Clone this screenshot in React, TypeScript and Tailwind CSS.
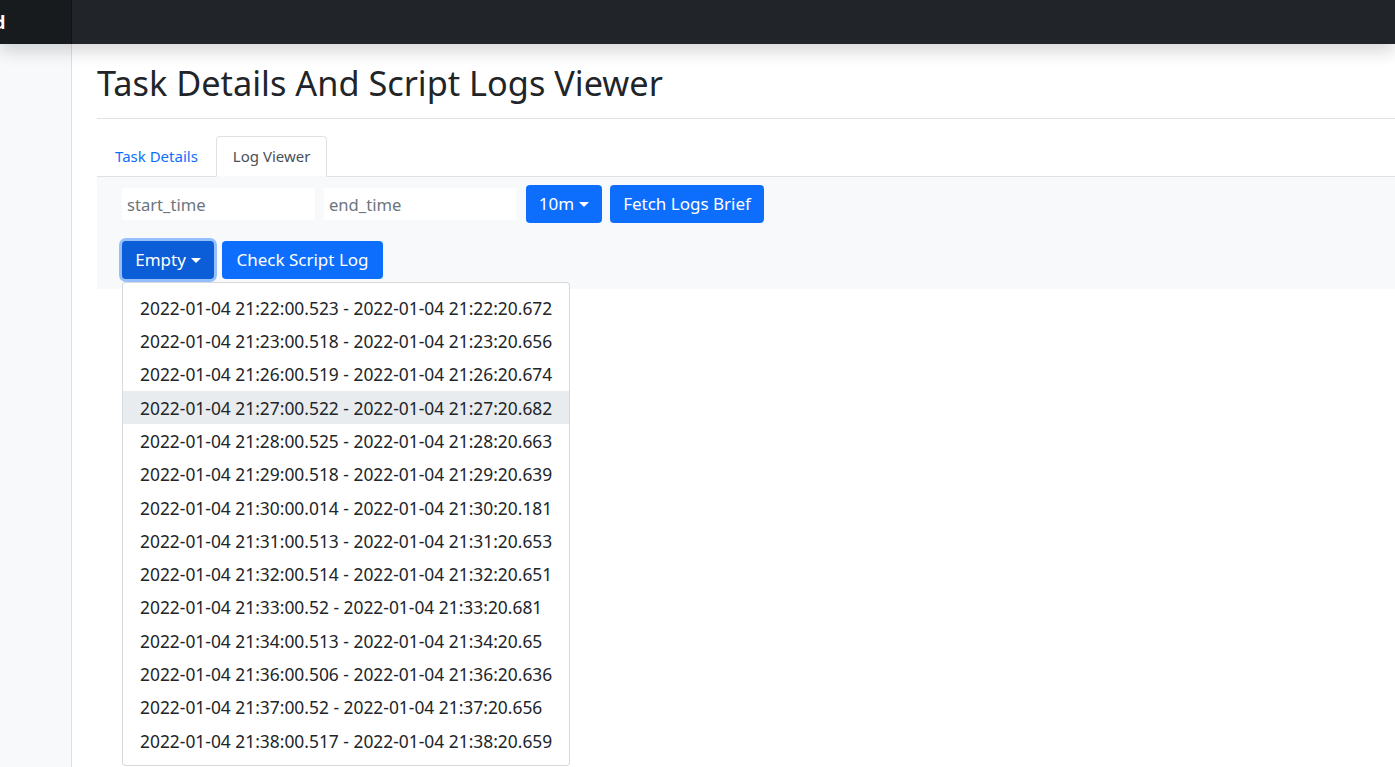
import { useState } from 'react';

const logRanges: string[] = [
  '2022-01-04 21:22:00.523 - 2022-01-04 21:22:20.672',
  '2022-01-04 21:23:00.518 - 2022-01-04 21:23:20.656',
  '2022-01-04 21:26:00.519 - 2022-01-04 21:26:20.674',
  '2022-01-04 21:27:00.522 - 2022-01-04 21:27:20.682',
  '2022-01-04 21:28:00.525 - 2022-01-04 21:28:20.663',
  '2022-01-04 21:29:00.518 - 2022-01-04 21:29:20.639',
  '2022-01-04 21:30:00.014 - 2022-01-04 21:30:20.181',
  '2022-01-04 21:31:00.513 - 2022-01-04 21:31:20.653',
  '2022-01-04 21:32:00.514 - 2022-01-04 21:32:20.651',
  '2022-01-04 21:33:00.52 - 2022-01-04 21:33:20.681',
  '2022-01-04 21:34:00.513 - 2022-01-04 21:34:20.65',
  '2022-01-04 21:36:00.506 - 2022-01-04 21:36:20.636',
  '2022-01-04 21:37:00.52 - 2022-01-04 21:37:20.656',
  '2022-01-04 21:38:00.517 - 2022-01-04 21:38:20.659',
];

function Caret() {
  return (
    <span className="ml-[5px] inline-block h-0 w-0 border-x-[5px] border-t-[5px] border-x-transparent border-t-white align-middle" />
  );
}

export default function App() {
  const [hovered, setHovered] = useState(3);
  const [tab, setTab] = useState('log');

  return (
    <div className="min-h-screen bg-white text-[#212529] font-['Noto_Sans','Open_Sans',sans-serif]">
      {/* top navbar */}
      <nav className="relative z-10 flex h-[44px] bg-[#212529] shadow-[0_8px_16px_rgba(0,0,0,0.15)]">
        <div className="flex w-[72px] items-center overflow-hidden bg-black/25 shadow-[inset_-1px_0_0_rgba(0,0,0,0.25)]">
          <span className="-ml-[6px] text-[18px] font-bold text-white">d</span>
        </div>
      </nav>

      <div className="flex">
        {/* sidebar */}
        <aside className="min-h-[723px] w-[72px] shrink-0 bg-[#f8f9fa] shadow-[inset_-1px_0_0_rgba(0,0,0,0.1)]" />

        {/* main */}
        <main className="flex-1 pl-[25px]">
          <h1 className="pt-[18px] pb-[15px] text-[34.3px] leading-[1.2] font-normal">
            Task Details And Script Logs Viewer
          </h1>
          <div className="border-b border-[#dee2e6]" />

          {/* tabs */}
          <div className="mt-[17px] flex border-b border-[#dee2e6] text-[15px]">
            <button
              onClick={() => setTab('details')}
              className={`-mb-px h-[41px] rounded-t-[4px] border px-[17px] ${
                tab === 'details' ? 'border-[#dee2e6] border-b-white bg-white text-[#495057]' : 'border-transparent text-[#0d6efd]'
              }`}
            >
              Task Details
            </button>
            <button
              onClick={() => setTab('log')}
              className={`-mb-px h-[41px] rounded-t-[4px] border px-[16px] ${
                tab === 'log' ? 'border-[#dee2e6] border-b-[#f8f9fa] bg-white text-[#495057]' : 'border-transparent text-[#0d6efd]'
              }`}
            >
              Log Viewer
            </button>
          </div>

          {/* tab content */}
          <div className="relative bg-[#f8f9fa] px-[25px] pt-[8px] pb-[8px]">
            <div className="flex items-center gap-[8px]">
              <input
                placeholder="start_time"
                className="h-[32px] w-[193px] bg-white px-[5px] text-[16.6px] outline-none placeholder:text-[#6c757d]"
              />
              <input
                placeholder="end_time"
                className="ml-[1px] h-[32px] w-[192px] bg-white px-[5px] text-[16.6px] outline-none placeholder:text-[#6c757d]"
              />
              <button className="ml-[2px] flex h-[38px] w-[76px] items-center justify-center rounded-[4px] bg-[#0d6efd] text-[17px] text-white">
                10m
                <Caret />
              </button>
              <button className="h-[38px] w-[154px] rounded-[4px] bg-[#0d6efd] text-[17px] text-white">
                Fetch Logs Brief
              </button>
            </div>

            <div className="mt-[18px] flex items-center gap-[8px] pb-[2px]">
              <button className="flex h-[38px] w-[92px] items-center justify-center rounded-[4px] bg-[#0b5ed7] text-[17px] text-white ring-[3px] ring-[rgba(49,132,253,0.5)]">
                Empty
                <Caret />
              </button>
              <button className="h-[38px] w-[161px] rounded-[4px] bg-[#0d6efd] text-[17px] text-white">
                Check Script Log
              </button>
            </div>

            {/* dropdown menu */}
            <ul className="absolute top-[105px] left-[25px] z-20 w-[448px] rounded-[4px] border border-black/15 bg-white py-[8px]">
              {logRanges.map((range, i) => (
                <li
                  key={range}
                  onMouseEnter={() => setHovered(i)}
                  className={`flex h-[33.3px] items-center px-[17px] text-[17.4px] whitespace-nowrap ${
                    hovered === i ? 'bg-[#e9ecef]' : ''
                  }`}
                >
                  {range}
                </li>
              ))}
            </ul>
          </div>
        </main>
      </div>
    </div>
  );
}
